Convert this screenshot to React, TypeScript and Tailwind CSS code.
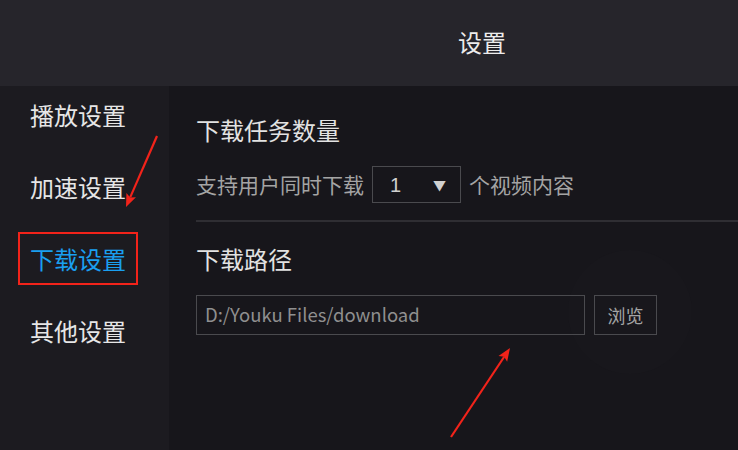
import React from 'react';

const FONT = "font-['Noto_Sans_CJK_SC','Noto_Sans',sans-serif]";

const menu = ['播放设置', '加速设置', '下载设置', '其他设置'];

function Arrow({ x1, y1, x2, y2 }: { x1: number; y1: number; x2: number; y2: number }) {
  const a = Math.atan2(y2 - y1, x2 - x1);
  const len = 14;
  const w = 0.38;
  const p1 = [x2 - len * Math.cos(a - w), y2 - len * Math.sin(a - w)];
  const p2 = [x2 - len * Math.cos(a + w), y2 - len * Math.sin(a + w)];
  const bx = x2 - len * 0.75 * Math.cos(a);
  const by = y2 - len * 0.75 * Math.sin(a);
  return (
    <g>
      <line x1={x1} y1={y1} x2={bx} y2={by} stroke="#f2231a" strokeWidth={2.2} />
      <polygon points={`${x2},${y2} ${p1[0]},${p1[1]} ${bx},${by} ${p2[0]},${p2[1]}`} fill="#f2231a" />
    </g>
  );
}

export default function App() {
  const active = 2;
  return (
    <div className={`relative w-[738px] h-[450px] overflow-hidden bg-[#17161b] ${FONT}`}>
      <div className="h-[86px] bg-[#26252b] flex items-center justify-center pl-[226px]">
        <span className="text-[24px] leading-none text-[#ececec] -mt-[2px]">设置</span>
      </div>

      {/* faint round glow behind the browse button */}
      <div className="absolute left-[568px] top-[250px] w-[124px] h-[124px] rounded-full bg-[#18171c]" />

      <div className="relative flex h-[364px]">
        <div className="w-[169px] bg-[#1c1b20] pt-[2px] flex flex-col gap-[19px]">
          {menu.map((m, i) => (
            <div
              key={m}
              className={`ml-[18px] w-[120px] h-[53px] flex items-center px-[10px] border-2 text-[24px] leading-none whitespace-nowrap ${
                i === active ? 'border-[#f2231a] text-[#1a9ff0]' : 'border-transparent text-[#e6e6e6]'
              }`}
            >
              {m}
            </div>
          ))}
        </div>

        <div className="flex-1 pl-[27px] pt-[28px]">
          <div className="h-[32px] flex items-center text-[24px] text-[#e2e2e2]">下载任务数量</div>

          <div className="mt-[20px] flex items-center h-[37px] text-[21px] text-[#a4a4a4]">
            <span>支持用户同时下载</span>
            <div className="ml-[8px] w-[89px] h-[37px] border border-[#4a4a4e] flex items-center justify-between pl-[17px] pr-[14px]">
              <span className="text-[#d0d0d0] text-[20px] font-['Liberation_Sans',sans-serif]">1</span>
              <span className="text-[#d0d0d0] text-[13px]">▼</span>
            </div>
            <span className="ml-[8px]">个视频内容</span>
          </div>

          <div className="mt-[17px] h-[2px] bg-[#2f2e33]" />

          <div className="mt-[21px] h-[32px] flex items-center text-[24px] text-[#e2e2e2]">下载路径</div>

          <div className="mt-[20px] flex items-center gap-[9px]">
            <div className="w-[389px] h-[40px] border border-[#4a4a4e] flex items-center pl-[8px] text-[18.5px] text-[#8f8f8f]">
              D:/Youku Files/download
            </div>
            <div className="w-[63px] h-[40px] border border-[#4a4a4e] flex items-center justify-center text-[18px] text-[#a4a4a4]">
              浏览
            </div>
          </div>
        </div>
      </div>

      <svg className="absolute inset-0 pointer-events-none" width={738} height={450}>
        <Arrow x1={157} y1={136} x2={126} y2={207} />
        <Arrow x1={451} y1={437} x2={510} y2={348} />
      </svg>
    </div>
  );
}
